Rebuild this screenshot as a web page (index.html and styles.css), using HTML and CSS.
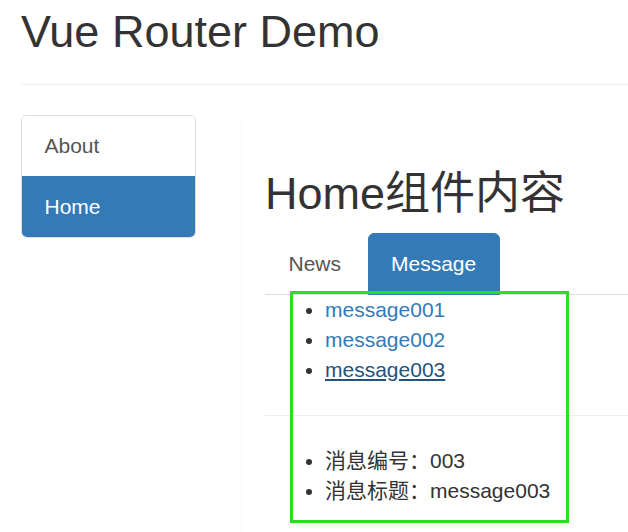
FILE: index.html
```html
<!DOCTYPE html>
<html lang="zh-CN">
<head>
<meta charset="utf-8">
<title>Vue Router Demo</title>
<link rel="stylesheet" href="styles.css">
</head>
<body>
<div class="page">
  <header class="page-header">
    <h1 class="title">Vue Router Demo</h1>
  </header>
  <div class="row">
    <nav class="list-group">
      <a class="list-item" href="#">About</a>
      <a class="list-item active" href="#">Home</a>
    </nav>
    <main class="content">
      <h2 class="home-title">Home组件内容</h2>
      <ul class="tabs">
        <li><a class="tab" href="#">News</a></li>
        <li><a class="tab active" href="#">Message</a></li>
      </ul>
      <ul class="msg-list">
        <li><a href="#">message001</a></li>
        <li><a href="#">message002</a></li>
        <li><a class="hover" href="#">message003</a></li>
      </ul>
      <hr class="divider">
      <ul class="detail-list">
        <li>消息编号：003</li>
        <li>消息标题：message003</li>
      </ul>
      <div class="highlight"></div>
    </main>
  </div>
</div>
</body>
</html>
```
FILE: styles.css
```css
* { box-sizing: border-box; }
html, body { margin: 0; padding: 0; background: #fff; }
body {
  font-family: "Liberation Sans", "Noto Sans CJK SC", sans-serif;
  font-size: 21px;
  line-height: 30px;
  color: #333;
  overflow: hidden;
}
.page { padding-left: 21px; }
.page-header {
  padding-top: 7px;
  padding-bottom: 27.5px;
  border-bottom: 1px solid #eee;
}
.title {
  margin: 0;
  font-size: 45px;
  font-weight: 400;
  line-height: 49.5px;
  color: #333;
}
.row {
  display: flex;
  align-items: flex-start;
  margin-top: 30px;
}
.list-group {
  width: 175px;
  flex: none;
  display: flex;
  flex-direction: column;
  border: 1px solid #ddd;
  border-radius: 6px;
  overflow: hidden;
}
.list-item {
  display: block;
  padding: 15px 22.5px;
  line-height: 30px;
  color: #555;
  text-decoration: none;
  background: #fff;
}
.list-item + .list-item { border-top: 1px solid #ddd; }
.list-item.active {
  background: #337ab7;
  border-top-color: #337ab7;
  color: #fff;
}
.content {
  position: relative;
  flex: 1;
  margin-left: 45px;
  margin-top: 3px;
  padding-top: 50.5px;
  padding-left: 23px;
  border-left: 1px solid #f9f9f9;
  min-height: 420px;
}
.home-title {
  margin: 0 0 14.5px;
  font-size: 45px;
  font-weight: 400;
  line-height: 49.5px;
  color: #333;
}
.tabs {
  display: flex;
  list-style: none;
  margin: 0;
  padding: 0;
  border-bottom: 1px solid #ddd;
}
.tabs li { margin-bottom: -1px; margin-right: 3px; }
.tab {
  display: block;
  padding: 15px 22.5px;
  line-height: 30px;
  border: 1px solid transparent;
  border-radius: 6px 6px 0 0;
  color: #555;
  text-decoration: none;
}
.tab.active {
  background: #337ab7;
  border-color: #337ab7;
  color: #fff;
}
.msg-list, .detail-list {
  margin: 0 0 15px;
  padding-left: 60px;
}
.msg-list a { color: #337ab7; text-decoration: none; }
.msg-list a.hover { color: #23527c; text-decoration: underline; }
.divider {
  margin: 30px 0;
  border: 0;
  border-top: 1px solid #eee;
  height: 0;
}
.highlight {
  position: absolute;
  left: 48px;
  top: 173px;
  width: 279px;
  height: 232px;
  border: 3px solid #2ae01c;
  pointer-events: none;
}
```
